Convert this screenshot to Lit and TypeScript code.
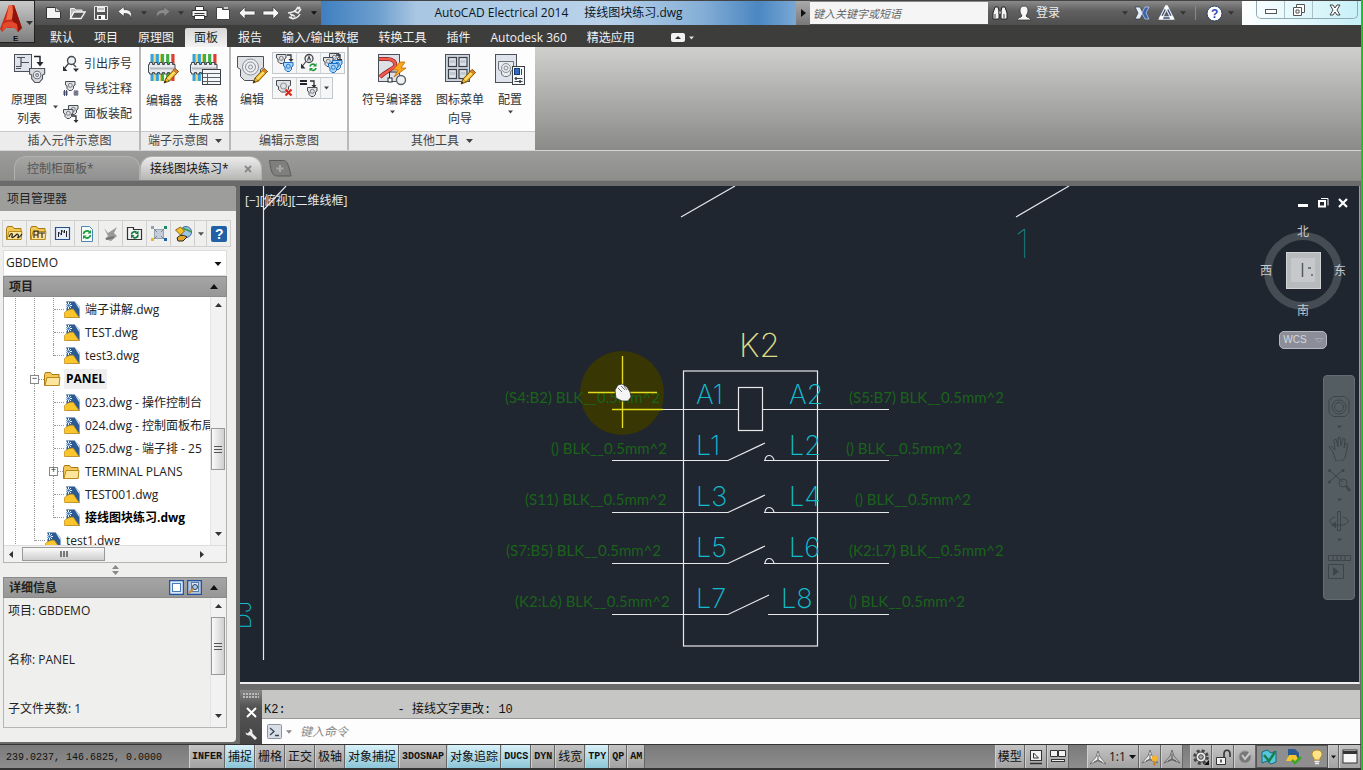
import { LitElement, html, svg, css } from "lit";
import { customElement } from "lit/decorators.js";
import { classMap } from "lit/directives/class-map.js";

const icon = (w: number, h: number, body: unknown) =>
  html`<svg width=${w} height=${h} viewBox="0 0 ${w} ${h}" aria-hidden="true">${body}</svg>`;

const caret = (color = "#333", w = 7) =>
  html`<svg width=${w} height="4" viewBox="0 0 7 4" aria-hidden="true"><path d="M0 0h7L3.500 4z" fill=${color} /></svg>`;

/* ---------- shared icon parts ---------- */

const clampShape = svg`
  <path d="M.5 .5h14v5l-2 1v3.500l-3 3.500h-4l-3-3.500V6.500l-2-1z" fill="#d8dadd" stroke="#4c5158" />
  <circle cx="7.500" cy="6.500" r="3.500" fill="#eceef0" stroke="#70757c" /><circle cx="7.500" cy="6.500" r="1.300" fill="none" stroke="#70757c" />`;
const pencil = svg`
  <path d="M1 15l2-5 9-9.500 3.500 3-9 9.500z" fill="#f5b81f" stroke="#7a5410" />
  <path d="M3 10l3.500 3" stroke="#7a5410" /><path d="M4.500 11.500l9-9.300" stroke="#fde58a" stroke-width="1.400" />
  <path d="M12 .5l3.500 3-1.700 1.800-3.500-3z" fill="#e9852c" stroke="#7a5410" stroke-width=".6" />
  <path d="M1 15l1-2.500 1.500 1.300z" fill="#222" />`;
const terminalStrip = svg`
  ${["#35a3dc", "#35a3dc", "#3faf46", "#3faf46", "#e23b30"].map(
    (c, i) => svg`<rect x=${3.5 + i * 5.2} y="1" width="3.200" height="27" fill=${c} />`,
  )}
  <path d="M8 1v27M13.200 1v27" stroke="#e9c53c" stroke-width="1.300" />
  <path d="M1.500 11.500h1v-2h3v2h2v-2h3v2h2v-2h3v2h2v-2h3v2h2v-2h3v2h2.500v8h-2.500v1.500h-3v-1.500h-2v1.500h-3v-1.500h-2v1.500h-3v-1.500h-2v1.500h-3v-1.500h-2v1.500h-3v-1.500h-1z" fill="#e8eaed" stroke="#454a50" />
  <path d="M3 15.500h24" stroke="#b5b9be" stroke-width="2" />`;
const smallClamp = (x: number, y: number, blue = false) => svg`
  <path transform="translate(${x} ${y})" d="M.5 .5h9.500v3.500l-1.500 1v2.500L6.500 9.500H4L2 7.500V5L.5 4z" fill=${blue ? "#a9d4f7" : "#dfe1e4"} stroke=${blue ? "#1d6fc4" : "#474c52"} />
  <circle cx=${x + 5.3} cy=${y + 4.3} r="2" fill="none" stroke=${blue ? "#1d6fc4" : "#6d7278"} stroke-width=".9" />`;
const drop = (x: number, y: number) => svg`
  <path d="M${x} ${y}h4v5" fill="none" stroke="#2c3036" stroke-width="1.300" /><path d="M${x + 1.5} ${y + 4}h5l-2.500 3z" fill="#2c3036" />`;
const folder = svg`<path d="M.5 14.500v-11l1-2h5l1.500 2h7v11z" fill="#f3c857" stroke="#a87912" /><path d="M1 14.500l2-8h13l-1 8z" fill="#fde59b" stroke="#b98a1c" />`;

/* ---------- quick access toolbar ---------- */

const Q = {
  blank: icon(17, 16, svg`<path d="M1.500 2.500h9l5 4v7h-14z" fill="#f4f4f4" stroke="#333" /><path d="M10.500 2.500v4h5" fill="#ccc" stroke="#555" />`),
  open: icon(17, 16, svg`<path d="M1.500 13.500v-10h4l1.500 1.500h6v2" fill="#bbb" stroke="#eee" /><path d="M1.500 13.500l3.500-6.500h11l-4 6.500z" fill="#555" stroke="#f4f4f4" stroke-width="1.400" />`),
  save: icon(16, 16, svg`<path d="M1.500 1.500h13v13h-13z" fill="#565656" stroke="#e8e8e8" /><path d="M4 2h8v5H4z" fill="#eee" /><path d="M4 10h8v4.500H4z" fill="#fff" /><path d="M5.500 11h2.500v3H5.500z" fill="#444" /><path d="M5 4h6" stroke="#888" />`),
  undo: icon(17, 16, svg`<path d="M1 6.500L7 1.500v3c6 0 9 3 7 9.500 0-4-2-5.500-7-5.500v3z" fill="#f4f4f4" stroke="#333" stroke-width=".6" />`),
  redo: icon(17, 16, svg`<path d="M16 6.500L10 1.500v3c-6 0-9 3-7 9.500 0-4 2-5.500 7-5.500v3z" fill="#8a8a8a" stroke="#555" stroke-width=".6" />`),
  print: icon(17, 16, svg`<path d="M4.500 1.500h8v4h-8z" fill="#fff" stroke="#333" /><path d="M1 5.500h15v6H1z" fill="#f2f2f2" stroke="#333" /><path d="M3.500 8.500h10" stroke="#333" /><path d="M3.500 10.500h10v4h-10z" fill="#fff" stroke="#333" />`),
  project: icon(16, 16, svg`<path d="M1.500 14.500v-12h6v2h7v10z" fill="#fff" stroke="#444" /><path d="M9 3h4" stroke="#eee" stroke-width="1.500" />`),
  prev: icon(18, 14, svg`<path d="M1 7l6-6v4h10v4H7v4z" fill="#f6f6f6" stroke="#444" stroke-width=".7" />`),
  next: icon(18, 14, svg`<path d="M17 7l-6-6v4H1v4h10v4z" fill="#f6f6f6" stroke="#444" stroke-width=".7" />`),
  surf: icon(18, 16, svg`<path d="M2 8c3-1 5 0 8-3l2-3M8 6l4 2 3-4M3 12c5 3 9 1 11-3M4 9l4 2" fill="none" stroke="#eee" stroke-width="1.500" /><circle cx="13" cy="3" r="1.500" fill="#eee" /><circle cx="7" cy="12" r="2" fill="none" stroke="#eee" />`),
};

/* ---------- ribbon ---------- */

const R = {
  schematic: icon(33, 33, svg`
    <rect x="1.500" y="1.500" width="17" height="17" fill="#dfe4ec" stroke="#4a4f58" />
    <path d="M3 13.500h5v-4h8M8 9.500V4.500M4 4.500h8M3 15.500h5" fill="none" stroke="#4a4f58" stroke-width="1.200" />
    <path d="M21 3.500h6v7" fill="none" stroke="#22262b" stroke-width="1.500" /><path d="M23.500 9h7L27 13.500z" fill="#22262b" />
    <g transform="translate(16 15) scale(1.080)">${clampShape}</g>`),
  balloon: icon(18, 18, svg`<circle cx="9.500" cy="5.500" r="4" fill="#eef0f2" stroke="#454a50" stroke-width="1.400" /><path d="M6.500 8.500L2 14M11 9l3 3" stroke="#454a50" stroke-width="1.400" /><path d="M1 11v5h4.500zM11 13.500h6L14 17z" fill="#2c3036" />`),
  wireNote: icon(18, 18, svg`${smallClamp(3, 1)}<path d="M2.500 10v6M4.500 10v6M1 12h5M1 14h5M13 10v6M15 10v6M11.500 12h5M11.500 14h5" stroke="#3a3f63" stroke-width=".9" />`),
  panelAsm: icon(18, 18, svg`${smallClamp(6, 0)}${smallClamp(1, 4)}${drop(10, 11)}`),
  editor: icon(34, 34, svg`${terminalStrip}<g transform="translate(16 15)">${pencil}</g>`),
  table: icon(34, 34, svg`${terminalStrip}<rect x="13.500" y="16.500" width="18" height="15" fill="#f4f6f8" stroke="#3c4147" /><path d="M14 20.500h17M14 24.500h17M14 28.500h17M18.500 20v11" stroke="#5b6168" />`),
  edit: icon(33, 33, svg`
    <path d="M1.500 3.500h26v11l-3 2v7l-4 4h-12l-4-4v-7l-3-2z" fill="#dfe1e4" stroke="#4c5158" />
    <circle cx="14.500" cy="14" r="8" fill="#eceef0" stroke="#8b9097" /><circle cx="14.500" cy="14" r="5" fill="none" stroke="#8b9097" /><circle cx="14.500" cy="14" r="2" fill="none" stroke="#8b9097" />
    <g transform="translate(16 15)">${pencil}</g>`),
  s1: icon(20, 20, svg`${smallClamp(1, 1)}${drop(12, 2)}${smallClamp(8, 9, true)}`),
  s2: icon(20, 20, svg`<circle cx="10" cy="5.500" r="4" fill="#eef0f2" stroke="#454a50" stroke-width="1.300" /><path d="M8.500 7.500l1.500-4 1.500 4M7 8.500l-4 5" fill="none" stroke="#454a50" stroke-width="1.200" /><path d="M2 10.500v5h4.500z" fill="#2c3036" /><path d="M11 13.500a3 3 0 0 1 5-1.500M17 15a3 3 0 0 1-5 1.500" fill="none" stroke="#1e9a3a" stroke-width="1.600" /><path d="M17.500 10v3.500H14zM10.500 18.500V15H14z" fill="#1e9a3a" />`),
  s3: icon(20, 20, svg`${smallClamp(6, 0)}${smallClamp(0, 4)}${drop(13, 2)}${smallClamp(9, 7, true)}${smallClamp(5, 10, true)}`),
  s4: icon(20, 20, svg`<path d="M1.500 2.500h14v5l-2 1v3l-3 2.500h-4l-3-2.500v-3l-2-1z" fill="#dfe1e4" stroke="#474c52" /><circle cx="8.500" cy="8" r="3" fill="none" stroke="#8b9097" /><path d="M10.500 11.500l6 6M16.500 11.500l-6 6" stroke="#d8271c" stroke-width="2.200" />`),
  s5: icon(20, 20, svg`<path d="M1 3h7M1 6h7" stroke="#22262b" stroke-width="1.800" />${drop(11, 3)}${smallClamp(8, 9)}`),
  symbol: icon(33, 33, svg`
    <rect x="2.500" y="1.500" width="21" height="27" fill="#dde0e6" stroke="#4a4f58" />
    <path d="M3 6h8c6 0 9 3 8 7-2 3-9 5-15 11" fill="none" stroke="#8e2019" stroke-width="4" /><path d="M3 6h8c6 0 9 3 8 7-2 3-9 5-15 11" fill="none" stroke="#ee5a50" stroke-width="2.600" />
    <path d="M24 9l-7 8h5l-4 7 12-9h-5l4-6z" fill="#f7a81b" stroke="#c8660a" stroke-width=".8" />
    <path d="M13.500 26v-7h7" fill="none" stroke="#22262b" /><rect x="12" y="25" width="4" height="4" fill="#fff" stroke="#22262b" /><circle cx="25" cy="27" r="4.500" fill="#eef0f2" stroke="#5b6168" stroke-width="1.400" />`),
  iconMenu: icon(33, 33, svg`
    <rect x="1.500" y="1.500" width="24" height="27" fill="#cdd4df" stroke="#4a4f58" />
    <g fill="#dde2ea" stroke="#3c4147" stroke-width="1.200"><rect x="4.500" y="4.500" width="8" height="9" /><rect x="15" y="4.500" width="8" height="9" /><rect x="4.500" y="16.500" width="8" height="9" /><rect x="15" y="16.500" width="8" height="9" /></g>
    <path d="M6 8.500h5M16.500 8.500h5M6 20.500h5M16.500 20.500h5" stroke="#c0c8d3" stroke-width="3" />
    <g transform="translate(16 16)">${pencil}</g>`),
  config: icon(33, 33, svg`
    <rect x="1.500" y="1.500" width="21" height="28" fill="#dfe4ec" stroke="#4a4f58" />
    <path d="M4.500 8.500h15v8l-3 2v3l-3 2h-3l-3-2v-3l-3-2z" fill="#e8eaed" stroke="#6d7278" /><circle cx="12" cy="15" r="4.500" fill="none" stroke="#8b9097" /><circle cx="12" cy="15" r="2" fill="none" stroke="#8b9097" />
    <rect x="18.500" y="13.500" width="12" height="18" fill="#f4f6f8" stroke="#3c4147" /><rect x="20.500" y="15.500" width="5" height="6" fill="#2c6bc0" stroke="#173d78" /><path d="M27.500 16v6M20.500 25.500h8M20.500 28.500h8" stroke="#3c4147" /><path d="M22 24v3M26 27v3" stroke="#3c4147" stroke-width="1.500" />`),
};

/* ---------- project manager ---------- */

const dwgIcon = icon(16, 17, svg`
  <path d="M2.500 .5h8l5 5v11h-13z" fill="#2c5b93" stroke="#8aa6c6" />
  <path d="M10.500 .5l5 5v3z" fill="#dfe9f4" />
  <path d="M.5 16.500v-5c3-3 7-4 9-3l5.500 8z" fill="#fac62c" stroke="#c08a12" stroke-width=".7" />
  <path d="M4.500 1v7M1 4.500h7M2 2l5 5M7 2L2 7" stroke="#eaf4ff" stroke-width="1" /><circle cx="4.500" cy="4.500" r="1.300" fill="#2f6db3" />`);
const folderIcon = icon(17, 16, folder);

const P = [
  { label: "打开项目", art: icon(18, 18, svg`${folder}<path d="M3 12c2-5 4-4 3-1s2 1 4-1 3 0 2 2 2 0 4-3" fill="none" stroke="#222" stroke-width="1.200" />`) },
  { label: "新建项目", art: icon(18, 18, svg`${folder}<path d="M4 13V6h4v7M8 8h4v5M12 8h3M4 10h4" fill="none" stroke="#222" stroke-width="1.100" />`) },
  { label: "新建图形", art: icon(18, 18, svg`<path d="M1.500 2.500h14v12h-14z" fill="#e4edf9" stroke="#274f8c" stroke-width="1.200" /><path d="M4.500 12V7l3 3V5l3 3V5M12.500 12V6" fill="none" stroke="#222" />`) },
  { label: "刷新", art: icon(18, 18, svg`<path d="M3.500 1.500h8l3 3v12h-11z" fill="#f5fbf5" stroke="#4c86b8" /><path d="M5.500 9a3.500 3.500 0 0 1 6-2M12.500 10a3.500 3.500 0 0 1-6 2" fill="none" stroke="#1d9c3b" stroke-width="1.800" /><path d="M13 5v3.500H9.500zM5 14v-3.500h3.500z" fill="#1d9c3b" />`) },
  { label: "发布检查", art: icon(18, 18, svg`<path d="M2 3l4 5 9-6-3 6 3 3-6 5-6-2 3-3z" fill="#9a9a9a" /><path d="M4 14l8-2" stroke="#777" stroke-width="2" />`) },
  { label: "项目范围更新", art: icon(18, 18, svg`<path d="M1.500 14.500v-12h6v2h8v10z" fill="#f2f2f2" stroke="#333" stroke-width="1.200" /><path d="M5.500 9.500a3 3 0 0 1 5-2M12 9.500a3 3 0 0 1-5 2.500" fill="none" stroke="#14753a" stroke-width="1.700" /><path d="M12.500 5.500v3.500H9zM5 13.500V10h3.500z" fill="#14753a" />`) },
  { label: "图形列表", art: icon(18, 18, svg`<rect x="4.500" y="4.500" width="9" height="9" fill="#c3ccd8" stroke="#9aa5b3" /><rect x="1" y="1" width="3" height="3" fill="#8fa3bb" /><rect x="14" y="1" width="3" height="3" fill="#1d8a6a" /><rect x="1" y="13" width="3" height="3" fill="#f0b91d" /><rect x="14" y="13" width="3" height="3" fill="#2060b0" /><path d="M4 4l3 3M14 4l-3 3M4 14l3-3M14 14l-3-3" stroke="#7c8794" />`) },
  { label: "发布", art: icon(18, 18, svg`<circle cx="12" cy="7" r="5.500" fill="#9fc4e8" stroke="#366a9e" /><path d="M9 3c3 2 6 2 8 4" fill="none" stroke="#3f9a4b" stroke-width="1.600" /><path d="M1.500 5l5-3 4 4-4 4z" fill="#f7c02b" stroke="#8c6510" /><path d="M3 13c3-4 7-3 10-1l-4 4H4z" fill="#e2a52d" stroke="#222" />`) },
];

const details = ["项目: GBDEMO", "名称: PANEL", "子文件夹数: 1"];

type Node = { text: string; depth: number; kind: "dwg" | "folder"; box?: string; bold?: boolean; hot?: boolean };
const tree: Node[] = [
  { text: "端子讲解.dwg", depth: 2, kind: "dwg" },
  { text: "TEST.dwg", depth: 2, kind: "dwg" },
  { text: "test3.dwg", depth: 2, kind: "dwg" },
  { text: "PANEL", depth: 1, kind: "folder", box: "−", bold: true, hot: true },
  { text: "023.dwg - 操作控制台", depth: 2, kind: "dwg" },
  { text: "024.dwg - 控制面板布局", depth: 2, kind: "dwg" },
  { text: "025.dwg - 端子排 - 25", depth: 2, kind: "dwg" },
  { text: "TERMINAL PLANS", depth: 2, kind: "folder", box: "+" },
  { text: "TEST001.dwg", depth: 2, kind: "dwg" },
  { text: "接线图块练习.dwg", depth: 2, kind: "dwg", bold: true },
  { text: "test1.dwg", depth: 1, kind: "dwg" },
];

/* ---------- drawing ---------- */

const rows = [
  { y: 223, l: "A1", r: "A2", rx: 549, lx: 265, lt: "(S4:B2) BLK__0.5mm^2", gx: 609, rt: "(S5:B7) BLK__0.5mm^2" },
  { y: 274, l: "L1", r: "L2", rx: 549, lx: 311, lt: "() BLK__0.5mm^2", gx: 606, rt: "() BLK__0.5mm^2" },
  { y: 326, l: "L3", r: "L4", rx: 549, lx: 285, lt: "(S11) BLK__0.5mm^2", gx: 615, rt: "() BLK__0.5mm^2" },
  { y: 377, l: "L5", r: "L6", rx: 549, lx: 266, lt: "(S7:B5) BLK__0.5mm^2", gx: 609, rt: "(K2:L7) BLK__0.5mm^2" },
  { y: 428, l: "L7", r: "L8", rx: 541, lx: 275, lt: "(K2:L6) BLK__0.5mm^2", gx: 609, rt: "() BLK__0.5mm^2" },
];

/* ---------- status bar ---------- */

const toggles: [string, boolean][] = [
  ["INFER", false], ["捕捉", true], ["栅格", false], ["正交", false], ["极轴", false], ["对象捕捉", true], ["3DOSNAP", false],
  ["对象追踪", true], ["DUCS", true], ["DYN", false], ["线宽", false], ["TPY", true], ["QP", false], ["AM", false],
];

const compass = (c: string) => svg`<path d="M8 1l2 6 6 7-8-3-8 3 6-7z" fill=${c} stroke="#555" stroke-width=".7" /><path d="M8 5v5l-4 2M8 10l4 2" stroke="#555" fill="none" />`;

@customElement("app-root")
export class AppRoot extends LitElement {
  static styles = css`
    :host { display: flex; flex-direction: column; box-sizing: border-box; height: 100vh; overflow: hidden; border-right: 2px solid #18c818; background: #6a6b6a; color: #222; font: 12px/18px "Open Sans", "Noto Sans CJK SC", sans-serif; }
    *, *::before, *::after { box-sizing: border-box; }
    button, input, select { font: inherit; color: inherit; border: 0; padding: 0; margin: 0; background: none; border-radius: 0; }
    button { display: inline-flex; align-items: center; justify-content: center; white-space: nowrap; }
    svg { display: block; flex: none; }
    a { color: inherit; text-decoration: none; }
    h2, p, ul { margin: 0; padding: 0; font-size: 12px; list-style: none; }

    .top { display: grid; grid-template-columns: 35px 1fr; background: #3d3d3c; height: 47px; flex: none; }
    .logo { height: 43px; flex-direction: column; background: linear-gradient(#c9c9c9, #7e7e7e); border: 1px solid #222; border-left: 0; }
    .bars { display: flex; flex-direction: column; min-width: 0; }
    .title { display: flex; height: 25px; background: linear-gradient(#8a8a8a, #616161 40%, #4f4f4f); border-top: 1px solid #444; }
    .quick { display: flex; width: 286px; padding-left: 6px; flex: none; }
    .quick button { width: 24px; }
    .quick .thin { width: 13px; }
    .caption { flex: 1; min-width: 0; display: flex; justify-content: center; align-items: center; gap: 16px; color: #0c1722; white-space: nowrap; background: linear-gradient(90deg, #3f7fc0, #6d9fce 12%, #a9c6e2 20%, #b9d2ea 60%, #86afd6 80%, #4b87c2 92%, #79a8d4); }
    .tools { display: flex; align-items: center; width: 446px; flex: none; color: #eee; }
    .tools .go { width: 14px; height: 24px; background: linear-gradient(#aaa, #777); }
    .search { width: 178px; height: 22px; padding: 0 3px; background: #f5f5f5; font-size: 11px; font-style: italic; color: #555; }
    .search::placeholder { color: #666; opacity: 1; }
    .tools button { width: 24px; height: 22px; }
    .tools .sign { width: auto; }
    .tools .thin { width: 10px; }
    .tools .space { flex: 1; }
    .tools .rule { width: 1px; height: 14px; background: #8a8a8a; margin: 0 6px 0 7px; }
    .tools .cloud { margin-right: 6px; }
    .glass { width: 119px; flex: none; padding-left: 14px; background: linear-gradient(100deg, #fff, #c5f0f7); }
    .glass div { display: flex; height: 18px; width: 102px; border: 1px solid #8fabb5; border-top: 0; border-radius: 0 0 5px 5px; }
    .glass button { flex: 1; border-right: 1px solid #a8c0c8; }
    .glass button:last-child { flex: 1.600; border: 0; }
    .tabs { display: flex; align-items: flex-end; height: 22px; padding-left: 5px; color: #f2f2f2; }
    .tabs button { height: 19px; padding: 0 10px; }
    .tabs .on { background: linear-gradient(#d8d8d8, #f2f2f2); color: #222; padding: 0 9px; border-radius: 2px 2px 0 0; margin: 0 1px; }
    .tabs .more { gap: 4px; padding: 0 26px; }

    .ribbon { display: flex; height: 104px; flex: none; background: linear-gradient(#cfcfcd, #8a8a88); border-bottom: 1px solid #d4d4d4; }
    .panel { display: flex; flex-direction: column; background: #fdfdfd; border-right: 2px solid #b9b9b9; }
    .panel:last-child { border: 0; }
    .body { flex: 1; display: flex; padding-top: 6px; min-height: 0; }
    .panel h2 { display: flex; align-items: center; justify-content: center; gap: 7px; height: 19px; font-weight: 400; color: #444; background: #ececec; border-top: 1px solid #c9c9c9; }
    .big { flex-direction: column; justify-content: flex-start; align-self: flex-start; color: #333; gap: 1px; line-height: 18px; }
    .big svg:first-child { margin-bottom: 4px; }
    .flag { align-self: center; margin: 30px -3px 0 -1px; }
    .col { display: flex; flex-direction: column; }
    .col button { height: 25px; gap: 4px; justify-content: flex-start; color: #333; line-height: 18px; }
    .p1 { width: 139px; padding-left: 4px; } .p1 .big { width: 50px; } .p1 .col { margin: -2px 0 0 7px; }
    .p2 { width: 88px; gap: 4px; padding-left: 4px; } .p2 .big { width: 38px; }
    .p3 { width: 116px; padding-left: 3px; gap: 2px; } .p3 .big { width: 36px; }
    .p4 { width: 186px; padding-left: 8px; gap: 4px; } .p4 .big { width: 70px; } .p4 .big + .big { width: 58px; } .p4 .big + .big + .big { width: 34px; }
    .minis { display: flex; flex-direction: column; gap: 3px; margin-top: -1px; }
    .minis div { display: flex; height: 22px; border: 1px solid #c3c8cc; align-self: flex-start; }
    .minis button { width: 24px; background: #f6f6f6; border-right: 1px solid #d4d7da; }
    .minis button:last-child { border: 0; width: 23px; }
    .minis .thin:last-child { width: 11px; }

    .docs { display: flex; align-items: flex-end; height: 29px; flex: none; padding-left: 14px; background: linear-gradient(#9c9c9a, #8d8d8b); }
    .doc { display: flex; align-items: center; justify-content: flex-start; height: 24px; width: 126px; padding: 0 12px; border-radius: 12px 12px 0 0; background: linear-gradient(#a5a5a4, #909090); border: 1px solid #b1b1b0; border-bottom: 0; color: #555; white-space: nowrap; }
    .doc.on { width: 122px; padding: 0 9px; justify-content: space-between; background: linear-gradient(#ececec, #b5b5b4); color: #111; }
    .plus { width: 26px; height: 24px; margin-left: 5px; }

    .main { flex: 1; display: flex; gap: 4px; min-height: 0; padding-top: 5px; background: #6a6b6a; border-top: 1px solid #858585; }
    .side { width: 236px; flex: none; display: flex; flex-direction: column; background: #efefee; border-radius: 0 4px 4px 0; overflow: hidden; margin-bottom: 2px; padding-bottom: 14px; }
    .head { height: 25px; padding-left: 7px; font-weight: 400; line-height: 25px; background: #9d9d9c; flex: none; }
    .bar { display: flex; height: 27px; margin: 9px 0 3px 2px; width: 229px; border: 1px solid #cfcfcf; flex: none; }
    .bar button { width: 24px; border-right: 1px solid #cfcfcf; flex: none; }
    .bar .thin { width: 12px; }
    .bar button:last-child { border: 0; }
    .picker { height: 26px; margin: 0 9px 0 3px; flex: none; position: relative; background: #fff; border: 1px solid #ddd; }
    .picker select { appearance: none; width: 100%; height: 100%; padding-left: 2px; }
    .picker svg { position: absolute; right: 4px; top: 11px; pointer-events: none; }
    .section { height: 21px; margin: 0 9px 0 3px; padding: 0 8px 0 5px; display: flex; align-items: center; gap: 3px; flex: none; background: linear-gradient(#a5a5a5, #969696); border: 1px solid #8b8b8b; }
    .section h2 { flex: 1; }
    .section button:last-child { margin-left: 5px; }
    .treebox { flex: 1; min-height: 0; margin: 0 9px 0 3px; border: 1px solid #b5b5b5; border-top: 0; display: grid; grid-template: minmax(0, 1fr) 17px / minmax(0, 1fr) 16px; }
    .tree { background: #fff; overflow: hidden; position: relative; padding-top: 1px; line-height: 23px; color: #222; white-space: nowrap; }
    .tree li { display: flex; align-items: center; height: 23px; }
    .tree li.hot { height: 24px; }
    .rail { align-self: stretch; flex: none; width: 19px; border-right: 1px dotted #999; }
    .rail:first-child { width: 12px; }
    .joint { flex: none; width: 10px; height: 1px; border-top: 1px dotted #999; }
    .tree .end { align-self: flex-start; height: 12px; }
    .twig { flex: none; width: 9px; height: 9px; margin: 0 -5px 0 -5px; font: 9px/7px "Liberation Mono", monospace; text-align: center; background: #fff; border: 1px solid #888; color: #224; z-index: 1; }
    .tree a { display: block; line-height: 20px; margin-left: 3px; padding: 0 2px; }
    .bold { font-weight: 700; color: #000; }
    .hot a { background: #efefef; }
    .vs { display: flex; flex-direction: column; align-items: center; background: #f2f2f2; border-left: 1px solid #e4e4e4; }
    .vs button, .hs button { width: 15px; height: 19px; flex: none; }
    .track { flex: 1; display: flex; flex-direction: column; width: 100%; }
    .thumb { width: 14px; height: 42px; background: linear-gradient(90deg, #fafafa, #cfcfcf); border: 1px solid #999; display: flex; align-items: center; justify-content: center; }
    .treebox .thumb { margin-top: auto; margin-bottom: 56px; }
    .info .thumb { height: 58px; }
    .hs { grid-column: 1 / 3; display: flex; align-items: center; background: #f2f2f2; border-top: 1px solid #ddd; padding-right: 16px; }
    .hs .bead { width: 83px; height: 14px; margin-left: 3px; background: linear-gradient(#fafafa, #cfcfcf); border: 1px solid #999; display: flex; align-items: center; justify-content: center; }
    .hs span { flex: 1; }
    .split { height: 14px; flex: none; display: flex; flex-direction: column; gap: 2px; align-items: center; justify-content: center; width: 230px; }
    .info { display: grid; grid-template-columns: 1fr 16px; height: 130px; margin: 0 9px 0 3px; border: 1px solid #b5b5b5; border-top: 0; flex: none; overflow: hidden; }
    .info .text { display: flex; flex-direction: column; gap: 31px; padding: 4px; color: #222; overflow: hidden; }

    .work { flex: 1; display: flex; flex-direction: column; min-width: 0; margin-right: 1px; }
    .canvas { flex: 1; min-height: 0; position: relative; overflow: hidden; background: #1f262f; border: 1px solid #9b9b9b; border-width: 0 1px 2px 0; border-bottom-color: #eee; }
    .plan { width: 100%; height: 100%; }
    .view { position: absolute; left: 5px; top: 6px; color: #e8e8e8; font-size: 12px; }
    .wins { position: absolute; right: 9px; top: 10px; display: flex; gap: 6px; }
    .wins button { width: 14px; height: 14px; }
    .cube { position: absolute; right: 12px; top: 36px; }
    .wcs { position: absolute; right: 32px; top: 145px; width: 48px; height: 18px; gap: 8px; background: #8b8e98; border: 1px solid #b5b8c0; border-radius: 5px; color: #d5d7dc; font: 10px/14px "Liberation Sans", sans-serif; }
    .nav { position: absolute; right: 4px; top: 189px; width: 32px; height: 225px; background: #545d62; border: 1px solid #656d72; border-radius: 4px; display: flex; flex-direction: column; align-items: center; padding-top: 18px; gap: 6px; }
    .nav button { width: 28px; height: 35px; flex-direction: column; gap: 6px; }
    .nav button:nth-child(2) { height: 26px; }

    .cmd { display: grid; grid-template: 29px 25px / 22px 1fr; margin-top: 6px; flex: none; }
    .grip { grid-row: 1 / 3; display: flex; flex-direction: column; align-items: center; gap: 9px; padding-top: 3px; background: linear-gradient(#868686, #555 30%, #444); overflow: hidden; }
    .log { display: flex; align-items: flex-end; gap: 112px; padding: 0 2px; background: #c6c6c4; border-bottom: 1px solid #999; font: 12px/16px "Liberation Mono", "Noto Sans CJK SC", monospace; color: #111; white-space: pre; }
    .entry { display: flex; align-items: center; background: #fdfdfd; padding-left: 5px; gap: 4px; }
    .entry input { flex: 1; padding-left: 4px; font-size: 12px; font-style: italic; }
    .entry input::placeholder { color: #888; opacity: 1; }

    .status { height: 26px; flex: none; display: flex; border-top: 1px solid #333; border-bottom: 2px solid #333; background: linear-gradient(#7a7a7a, #8d8d8d); }
    .xyz { width: 189px; padding-left: 6px; font: 10px/26px "Liberation Mono", monospace; color: #111; white-space: pre; flex: none; }
    .status button { height: 23px; padding: 1px 2px 0; border-right: 1px solid #666; border-left: 1px solid #cfcfcf; background: linear-gradient(#c4c4c4, #a2a2a2); color: #111; }
    .status button.lat { font: 700 10px/22px "Liberation Mono", monospace; }
    .status button.on { background: linear-gradient(#d9f1f8, #8cc6d8); }
    .push { flex: 1; }
    .status .w { width: 22px; flex: none; }
    .status .hole { width: 18px; }
    .status .slot { width: 7px; }
    .tray { display: flex; align-items: center; justify-content: space-around; width: 72px; background: #8f8f8f; border: 1px solid #555; }
  `;

  private arrow(dir: "u" | "d" | "l" | "r", label: string) {
    const d = { u: "M0 4h7L3.500 0z", d: "M0 0h7L3.500 4z", l: "M5 0v7L1 3.500z", r: "M1 0v7l4-3.500z" }[dir];
    return html`<button aria-label=${label}><svg width="7" height="7" viewBox="0 0 7 7"><path d=${d} fill="#333" /></svg></button>`;
  }

  private get header() {
    const q = (label: string, art: unknown) => html`<button aria-label=${label}>${art}</button>`;
    const thin = (c: string) => html`<button class="thin" aria-label="下拉">${caret(c, 6)}</button>`;
    return html`<header class="top">
      <button class="logo" aria-label="应用程序菜单">
        <svg width="34" height="40" viewBox="0 0 34 40">
          <path d="M0 27L9 3h5l8 23-4 4-3-4H6l-4 4z" fill="#c8301a" />
          <path d="M9 3L6 18l8-1-2-14z" fill="#ef6a45" /><path d="M14 3l8 23-4 4-6-13z" fill="#8f1409" /><path d="M3 22c5-3 9-3 14 0l1 7c-5-5-12-5-16 0z" fill="#e3492c" />
          <path d="M26 19h7l-3.500 4z" fill="#333" />
          <text x="13" y="39" font-size="8" font-weight="700" fill="#111" font-family="Liberation Sans">E</text>
        </svg>
      </button>
      <div class="bars">
        <div class="title">
          <nav class="quick">
            ${q("新建", Q.blank)}${q("打开", Q.open)}${q("保存", Q.save)}${q("放弃", Q.undo)}${thin("#333")}${q("重做", Q.redo)}${thin("#333")}
            ${q("打印", Q.print)}${q("项目管理器", Q.project)}${q("上一个", Q.prev)}${q("下一个", Q.next)}${q("浏览器", Q.surf)}${thin("#111")}
          </nav>
          <div class="caption"><span>AutoCAD Electrical 2014</span><span>接线图块练习.dwg</span></div>
          <div class="tools">
            <button class="go" aria-label="展开搜索"><svg width="5" height="8" viewBox="0 0 5 8"><path d="M0 0v8l5-4z" fill="#111" /></svg></button>
            <input class="search" aria-label="搜索" placeholder="键入关键字或短语" />
            ${q("搜索", icon(16, 16, svg`<path d="M3 2h3l1 4v8H1V8zM10 2h3l2 6v6H9V6z" fill="#f4f4f4" stroke="#222" /><path d="M7 6h2v3H7z" fill="#ddd" stroke="#222" stroke-width=".6" /><path d="M3 9v4M12 9v4" stroke="#444" />`))}
            ${q("用户", icon(16, 17, svg`<path d="M8 1c3 0 4 2 4 4.500S10.500 10 10 11c1 2 4 1 5 4H1c1-3 4-2 5-4-.5-1-2-3-2-5.500S5 1 8 1z" fill="#f6f6f6" stroke="#333" stroke-width=".8" />`))}
            <button class="sign">登录</button>
            <span class="space"></span>
            ${thin("#333")}
            ${q("Exchange", icon(16, 16, svg`<path d="M1 2h5l3 6-3 6H1l3-6z" fill="#e7edf7" stroke="#234" stroke-width=".7" /><path d="M15 2h-4L8 8l3 6h4l-3-6z" fill="#3863b5" stroke="#ccd8ee" stroke-width=".7" />`))}
            ${q("Autodesk 360", icon(17, 16, svg`<path d="M8.500 2L14 13H3z" fill="none" stroke="#e8eef8" stroke-width="3.500" /><path d="M8.500 2L14 13H3z" fill="none" stroke="#38507c" stroke-width="1.300" /><circle cx="8.500" cy="3" r="2" fill="#fff" /><circle cx="3.500" cy="12.500" r="2" fill="#fff" /><circle cx="13.500" cy="12.500" r="2" fill="#fff" />`))}
            ${thin("#333")}<span class="rule"></span>
            ${q("帮助", html`<svg width="17" height="17" viewBox="0 0 17 17"><circle cx="8.500" cy="8.500" r="7.500" fill="#fff" stroke="#2b3f66" /><text x="5" y="13" font-size="12" font-weight="700" fill="#2a50b8" font-family="Liberation Sans">?</text></svg>`)}
            <button class="thin cloud" aria-label="下拉">${caret("#333", 6)}</button>
          </div>
          <div class="glass"><div>
            ${q("最小化", icon(12, 12, svg`<rect x=".5" y="5.500" width="11" height="4" fill="#fff" stroke="#555" />`))}
            ${q("还原", icon(12, 12, svg`<path d="M3.500 .5h8v8h-8z" fill="#fff" stroke="#555" /><path d="M.5 3.500h8v8h-8z" fill="#fff" stroke="#555" /><path d="M3 6h3v3H3z" fill="none" stroke="#555" />`))}
            ${q("关闭", icon(12, 12, svg`<path d="M1 1h3l2 3 2-3h3L8 6l3 5H8L6 8l-2 3H1l3-5z" fill="#fff" stroke="#444" />`))}
          </div></div>
        </div>
        <nav class="tabs">
          ${["默认", "项目", "原理图", "面板", "报告", "输入/输出数据", "转换工具", "插件", "Autodesk 360", "精选应用"].map(
            (t) => html`<button class=${classMap({ on: t === "面板" })}>${t}</button>`,
          )}
          <button class="more" aria-label="最小化功能区">${icon(14, 9, svg`<rect width="14" height="9" rx="2" fill="#f2f2f2" /><path d="M4 6h6L7 3z" fill="#333" />`)}${caret("#ddd", 5)}</button>
        </nav>
      </div>
    </header>`;
  }

  private get ribbon() {
    const big = (art: unknown, a: string, b: unknown = "") => html`<button class="big">${art}<span>${a}</span><span>${b}</span></button>`;
    const mini = (art: unknown, label: string) => html`<button aria-label=${label}>${art}</button>`;
    return html`<section class="ribbon">
      <div class="panel">
        <div class="body p1">
          ${big(R.schematic, "原理图", "列表")}<span class="flag">${caret("#444", 5)}</span>
          <div class="col"><button>${R.balloon}引出序号</button><button>${R.wireNote}导线注释</button><button>${R.panelAsm}面板装配</button></div>
        </div>
        <h2>插入元件示意图</h2>
      </div>
      <div class="panel">
        <div class="body p2">${big(R.editor, "编辑器")}${big(R.table, "表格", "生成器")}</div>
        <h2>端子示意图 ${caret("#444")}</h2>
      </div>
      <div class="panel">
        <div class="body p3">${big(R.edit, "编辑")}
          <div class="minis">
            <div>${mini(R.s1, "复制示意图")}${mini(R.s2, "重排序号")}${mini(R.s3, "复制部件")}</div>
            <div>${mini(R.s4, "删除")}${mini(R.s5, "对齐")}<button class="thin" aria-label="更多">${caret("#444", 5)}</button></div>
          </div>
        </div>
        <h2>编辑示意图</h2>
      </div>
      <div class="panel">
        <div class="body p4">${big(R.symbol, "符号编译器", caret("#444", 5))}${big(R.iconMenu, "图标菜单", "向导")}${big(R.config, "配置", caret("#444", 5))}</div>
        <h2>其他工具 ${caret("#444")}</h2>
      </div>
    </section>`;
  }

  private node(n: Node, i: number) {
    const last = i === tree.length - 1 || (n.depth === 2 && tree[i + 1]?.depth === 1);
    return html`<li class=${classMap({ hot: !!n.hot })}>
      <i class="rail"></i><i class=${classMap({ rail: true, end: last && n.depth === 1 })}></i>
      ${n.depth === 2 ? html`<i class=${classMap({ rail: true, end: last })}></i>` : ""}
      ${n.box ? html`<span class="twig">${n.box}</span>` : ""}<i class="joint"></i>
      ${n.kind === "dwg" ? dwgIcon : folderIcon}
      <a href="#" class=${classMap({ bold: !!n.bold })}>${n.text}</a>
    </li>`;
  }

  private get side() {
    const grip = icon(8, 8, svg`<path d="M0 1.500h8M0 4.500h8M0 7.500h8" stroke="#555" />`);
    return html`<aside class="side">
      <h2 class="head">项目管理器</h2>
      <div class="bar">
        ${P.map((p) => html`<button aria-label=${p.label}>${p.art}</button>`)}
        <button class="thin" aria-label="更多">${caret("#555", 6)}</button>
        <button aria-label="帮助"><svg width="16" height="16" viewBox="0 0 16 16"><rect width="16" height="16" rx="2" fill="#2160a5" /><text x="4" y="13" font-size="14" font-weight="700" fill="#fff" font-family="Liberation Sans">?</text></svg></button>
      </div>
      <div class="picker"><select aria-label="项目选择"><option>GBDEMO</option></select>${caret("#111", 8)}</div>
      <div class="section"><h2>项目</h2><button aria-label="折叠项目">${icon(8, 5, svg`<path d="M0 5h8L4 0z" fill="#111" />`)}</button></div>
      <div class="treebox">
        <ul class="tree">${tree.map((n, i) => this.node(n, i))}</ul>
        <div class="vs">${this.arrow("u", "向上")}<div class="track"><div class="thumb">${grip}</div></div>${this.arrow("d", "向下")}</div>
        <div class="hs">${this.arrow("l", "向左")}<div class="bead">${icon(8, 6, svg`<path d="M1 0v6M4 0v6M7 0v6" stroke="#555" stroke-width="1.500" />`)}</div><span></span>${this.arrow("r", "向右")}</div>
      </div>
      <div class="split">${icon(7, 4, svg`<path d="M0 4h7L3.500 0z" fill="#888" />`)}${caret("#888")}</div>
      <div class="section"><h2>详细信息</h2>
        <button aria-label="详细信息">${icon(15, 15, svg`<rect x=".5" y=".5" width="14" height="14" fill="#d7e8fb" stroke="#24549b" stroke-width="1.500" /><rect x="3.500" y="3.500" width="8" height="8" fill="#fff" stroke="#4a7ab8" />`)}</button>
        <button aria-label="预览">${icon(15, 15, svg`<rect x=".5" y=".5" width="14" height="14" fill="#b4c8e0" stroke="#24549b" stroke-width="1.500" /><rect x="4.500" y="2.500" width="7" height="9" fill="#dce8f5" stroke="#5b7ca6" /><circle cx="8" cy="7" r="2.500" fill="#a9c8ea" stroke="#345" /><path d="M6 9l-4 4" stroke="#d08a2a" stroke-width="2" />`)}</button>
        <button aria-label="折叠详细信息">${icon(8, 5, svg`<path d="M0 5h8L4 0z" fill="#111" />`)}</button>
      </div>
      <div class="info">
        <div class="text">${details.map((d) => html`<p>${d}</p>`)}</div>
        <div class="vs">${this.arrow("u", "向上")}<div class="track"><div class="thumb">${grip}</div></div>${this.arrow("d", "向下")}</div>
      </div>
    </aside>`;
  }

  private get plan() {
    const wire = "#e6e8ea";
    return html`<svg class="plan" role="img" aria-label="K2 接线图">
      <g fill="none" stroke=${wire} stroke-width="1.200">
        <path d="M23.500 0v474M23.500 24L46 0M441 31L495 0M776 31L829 0" />
        <rect x="443.500" y="185" width="134" height="275" /><rect x="498.500" y="201.500" width="24" height="43" />
        ${rows.map((r, i) => i === 0
          ? svg`<path d="M372 ${r.y + 0.5}H498M522 ${r.y + 0.5}H649" />`
          : svg`<path d="M372 ${r.y + 0.5}H488L${i === 4 ? 529 : 525} ${r.y - (i === 4 ? 19 : 17)}M${i === 4 ? 528 : 524} ${r.y + 0.5}H649" />${i < 4 ? svg`<path d="M525 ${r.y}c1-6 7-6 9 0" />` : ""}`)}
      </g>
      <circle cx="382" cy="207" r="42" fill="#3b3700" opacity=".92" />
      <g font-family="Lato, Liberation Sans, sans-serif" font-size="15" fill="#1b621b">
        ${rows.map((r, i) => svg`<text x=${r.lx} y=${217 + i * 51}>${r.lt}</text><text x=${r.gx} y=${217 + i * 51}>${r.rt}</text>`)}
      </g>
      <g font-family="Inter, Lato, sans-serif" font-weight="200" font-size="27" fill="#12bcd0">
        ${rows.map((r, i) => svg`<text x="456" y=${218 + i * 51}>${r.l}</text><text x=${r.rx} y=${218 + i * 51}>${r.r}</text>`)}
        <text x="499" y="171" font-size="33" fill="#dcdc86">K2</text>
        <text x="775" y="72" font-size="40" font-weight="100" fill="#148a86">1</text>
        <text transform="translate(11 443) rotate(-90)" font-size="22">DJ</text>
      </g>
      <path d="M372 223.500h51M348 206.500h69M382.500 170v72" stroke="#e2dc1c" stroke-width="1.400" />
      <path d="M375 204l3-5 4-1 5 3 3 5 1 5-3 4h-6l-6-3z" fill="#f4f4f4" stroke="#222" stroke-width=".7" /><path d="M378 202l4 4M381 200l4 4M384 200l3 4" stroke="#777" />
    </svg>`;
  }

  private get work() {
    const ink = "#3c454a";
    return html`<main class="work">
      <div class="canvas">
        ${this.plan}
        <span class="view">[−][俯视][二维线框]</span>
        <div class="wins">
          <button aria-label="最小化视口">${icon(12, 12, svg`<path d="M1 8.500h10" stroke="#fff" stroke-width="3" />`)}</button>
          <button aria-label="还原视口">${icon(12, 12, svg`<path d="M4 1.500h7v7" fill="none" stroke="#fff" /><path d="M2 4h6v5.500H2z" fill="none" stroke="#fff" stroke-width="2" />`)}</button>
          <button aria-label="关闭视口">${icon(12, 12, svg`<path d="M2 2l8 8M10 2l-8 8" stroke="#fff" stroke-width="2.200" />`)}</button>
        </div>
        <svg class="cube" width="90" height="98" viewBox="0 0 90 98" role="img" aria-label="ViewCube">
          <circle cx="46" cy="49" r="35" fill="none" stroke="#444c54" stroke-width="8" />
          <rect x="29.500" y="30.500" width="34" height="36" fill="#b8bbbe" stroke="#d0d2d4" /><rect x="34" y="36" width="24" height="24" fill="#c6c8ca" />
          <path d="M45.500 41v14M51 46h3M54 53h2" stroke="#555c66" stroke-width="1.500" />
          <g font-size="12" fill="#c6c9cc" font-family="Noto Sans CJK SC" text-anchor="middle"><text x="46" y="14">北</text><text x="46" y="93">南</text><text x="9" y="53">西</text><text x="83" y="53">东</text></g>
        </svg>
        <button class="wcs">WCS ${icon(8, 5, svg`<path d="M0 .5h8l-4 4z" fill="none" stroke="#a5a8b0" />`)}</button>
        <nav class="nav">
          <button aria-label="全导航控制盘">${icon(24, 24, svg`<path d="M6 1.500h12l4 4v12l-4 4H6l-4-4v-12z" fill="none" stroke=${ink} /><circle cx="12" cy="12" r="7" fill="none" stroke=${ink} /><circle cx="12" cy="12" r="4.500" fill="none" stroke=${ink} />`)}${caret(ink, 5)}</button>
          <button aria-label="平移">${icon(24, 25, svg`<path d="M6 16l-4-5 2-1 4 4-1-10 2-1 2 8V2l2-1 1 9 2-8 2 1-1 9 2-5 2 1-3 14-3 3h-6z" fill="none" stroke=${ink} />`)}</button>
          <button aria-label="范围缩放">${icon(24, 24, svg`<path d="M2 2l14 12M16 2L2 14" stroke=${ink} /><circle cx="2.500" cy="2.500" r="1.500" fill=${ink} /><circle cx="16" cy="2.500" r="1.500" fill=${ink} /><circle cx="2.500" cy="14" r="1.500" fill=${ink} /><circle cx="16" cy="15" r="4" fill="none" stroke=${ink} /><path d="M19 18l4 5" stroke=${ink} stroke-width="2.500" />`)}${caret(ink, 5)}</button>
          <button aria-label="动态观察">${icon(24, 22, svg`<path d="M10.500 1.500h3v19h-3z" fill="none" stroke=${ink} /><path d="M8 7C1 9 1 13 8 15M16 7c7 2 7 6 0 8H7" fill="none" stroke=${ink} /><path d="M9 11.500l-5 3.500 5 3z" fill=${ink} />`)}${caret(ink, 5)}</button>
          <button aria-label="ShowMotion">${icon(24, 27, svg`<path d="M1.500 2.500h22v5h-22zM6 3v4M10 3v4M14 3v4M18 3v4M1.500 11.500h15v14h-15z" fill="none" stroke=${ink} /><path d="M6 14v9l6-4.500z" fill=${ink} />`)}</button>
        </nav>
      </div>
      <section class="cmd">
        <div class="grip">
          ${icon(16, 5, svg`<path d="M0 1h16M0 4h16" stroke="#bbb" stroke-width="2" stroke-dasharray="2 1" />`)}
          <button aria-label="关闭">${icon(11, 11, svg`<path d="M1 1l9 9M10 1l-9 9" stroke="#fff" stroke-width="2" />`)}</button>
          <button aria-label="自定义">${icon(14, 14, svg`<path d="M5 5l7 7" stroke="#eee" stroke-width="3" /><path d="M5.500 1.500a3.500 3.500 0 1 1-4 4l2.500 1 2.500-2z" fill="#eee" />`)}</button>
        </div>
        <div class="log"><span>K2:</span><span>- 接线文字更改: 10</span></div>
        <div class="entry"><button aria-label="最近使用的命令">${icon(15, 15, svg`<rect x=".5" y=".5" width="14" height="14" rx="1" fill="#d9dde6" stroke="#8c93a2" /><path d="M3 4l4 3.500L3 11M8 11.500h4" fill="none" stroke="#38415a" stroke-width="1.300" />`)}</button>${caret("#888", 6)}
          <input aria-label="命令行" placeholder="键入命令" /></div>
      </section>
    </main>`;
  }

  private get status() {
    const b = (label: string, art: unknown) => html`<button class="w" aria-label=${label}>${art}</button>`;
    return html`<footer class="status">
      <span class="xyz">239.0237, 146.6825, 0.0000</span>
      ${toggles.map(([t, on]) => html`<button class=${classMap({ on, lat: /^[\dA-Z]+$/.test(t) })} aria-pressed=${on ? "true" : "false"}>${t}</button>`)}
      <span class="push"></span>
      <button>模型</button>
      ${b("布局", icon(14, 16, svg`<rect x="1.500" y="1.500" width="11" height="10" fill="#f2f2f2" stroke="#333" /><path d="M4.500 4v5h5z" fill="none" stroke="#333" /><path d="M1 14.500h12" stroke="#333" stroke-width="1.500" />`))}
      ${b("快速查看图形", icon(16, 16, svg`<path d="M.5 1.500h7v6h-7zM8.500 1.500h7v6h-7z" fill="#f2f2f2" stroke="#333" /><path d="M1 11.500h14" stroke="#333" stroke-width="3" /><path d="M2 11.500h12" stroke="#eee" />`))}
      <span class="hole"></span>
      <button class="scale">${icon(16, 15, compass("#f2f2f2"))}&nbsp;<span>1:1</span>&nbsp;${caret("#111")}</button>
      ${b("注释可见性", icon(17, 17, svg`${compass("#f2f2f2")}<circle cx="12.500" cy="9.500" r="3" fill="#f7b52b" /><path d="M12.500 12.500v4" stroke="#c87d12" stroke-width="2" />`))}
      ${b("自动缩放", icon(17, 16, compass("#b5b5b5")))}
      <span class="slot"></span>
      ${b("切换工作空间", icon(17, 17, svg`<circle cx="8" cy="8" r="6" fill="none" stroke="#444" stroke-width="3.600" stroke-dasharray="2.700 2" /><circle cx="8" cy="8" r="5" fill="#eee" stroke="#444" /><circle cx="8" cy="8" r="2.300" fill="#aaa" stroke="#444" /><path d="M16 11v5h-5z" fill="#111" />`))}
      ${b("锁定", icon(17, 17, svg`<path d="M1.500 8.500h9v7h-9z" fill="#f2f2f2" stroke="#333" /><path d="M9 8V5c0-5 6-5 6 0v3" fill="none" stroke="#333" stroke-width="1.600" /><path d="M6 10.500v3" stroke="#333" stroke-width="1.500" />`))}
      ${b("硬件加速", icon(14, 14, svg`<circle cx="7" cy="7" r="6" fill="#777" stroke="#999" /><path d="M4 5l3 4 5-6" stroke="#c9c9c9" stroke-width="2" fill="none" />`))}
      <div class="tray">
        ${icon(16, 16, svg`<path d="M1 3l5-2 4 3 5-2v11l-5 2-4-3-5 2z" fill="#55c8dc" stroke="#176a80" /><path d="M3 6l5 6 6-9" fill="none" stroke="#1c7d4a" stroke-width="2.500" />`)}
        ${icon(17, 17, svg`<path d="M3 1h7l4 4v7H3z" fill="#2c5b93" /><path d="M1 13l3-6h7l3 6z" fill="#fac62c" /><path d="M7 12l3 3 6-6" fill="none" stroke="#3da52e" stroke-width="2.500" />`)}
        ${icon(12, 16, svg`<path d="M6 1c6 0 6 6 3 8v2H3V9C0 7 0 1 6 1z" fill="#ffe48a" stroke="#b98a2c" /><path d="M3.500 12.500h5M4 14.500h4" stroke="#eee" stroke-width="1.600" />`)}
      </div>
      <button class="thin" aria-label="状态栏菜单">${caret("#111", 5)}</button>
      ${b("全屏显示", icon(16, 16, svg`<rect x="1" y="1" width="14" height="13" fill="#f6f6f6" stroke="#333" /><path d="M1 3.500h14" stroke="#333" stroke-width="3" />`))}
    </footer>`;
  }

  render() {
    return html`${this.header}${this.ribbon}
      <nav class="docs">
        <button class="doc">控制柜面板*</button>
        <button class="doc on"><span>接线图块练习*</span>${icon(8, 8, svg`<path d="M1 1l6 6M7 1L1 7" stroke="#888" stroke-width="1.800" />`)}</button>
        <button class="plus" aria-label="新图形">${icon(23, 17, svg`<path d="M.5 .5h14c3 0 5 3 7.500 15.500H8C4 16 2 13 .5 .5z" fill="#7f7f7e" stroke="#5c5c5c" /><path d="M11 5v7M7.500 8.500h7" stroke="#a8a8a8" stroke-width="2" />`)}</button>
      </nav>
      <div class="main">${this.side}${this.work}</div>
      ${this.status}`;
  }
}
